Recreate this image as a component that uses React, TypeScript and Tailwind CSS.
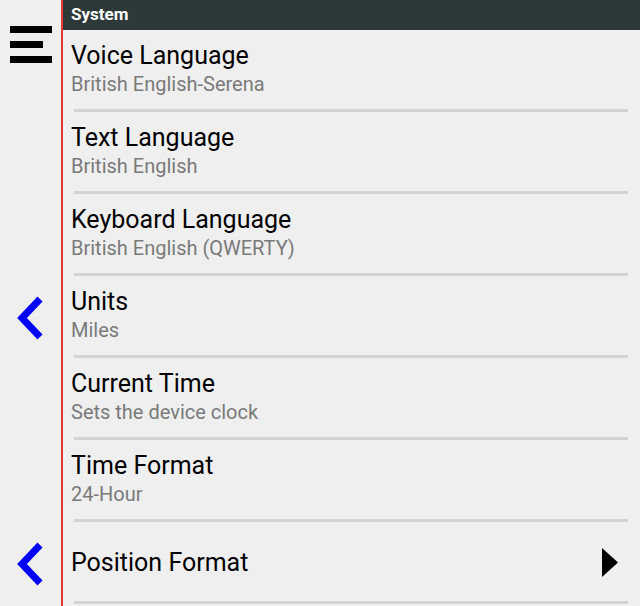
const rows = [
  { title: "Voice Language", sub: "British English-Serena" },
  { title: "Text Language", sub: "British English" },
  { title: "Keyboard Language", sub: "British English (QWERTY)" },
  { title: "Units", sub: "Miles" },
  { title: "Current Time", sub: "Sets the device clock" },
  { title: "Time Format", sub: "24-Hour" },
];

function Chevron() {
  return (
    <svg width="30" height="44" viewBox="0 0 30 44">
      <polyline points="25,3 7,22 25,41" fill="none" stroke="#0000ff" strokeWidth="7" strokeLinejoin="miter" />
    </svg>
  );
}

export default function App() {
  return (
    <div
      className="flex h-[606px] w-[640px] overflow-hidden bg-[#efefef]"
      style={{ fontFamily: "Roboto, 'Liberation Sans', sans-serif" }}
    >
      {/* side rail */}
      <div className="flex w-[63px] shrink-0 flex-col border-r-2 border-[#e53935]">
        <div className="ml-[10px] mt-[26px] flex flex-col gap-[8px]">
          <div className="h-[7px] w-[42px] bg-black" />
          <div className="h-[7px] w-[33px] bg-black" />
          <div className="h-[7px] w-[42px] bg-black" />
        </div>
        <div className="ml-[15px] mt-[233px]">
          <Chevron />
        </div>
        <div className="ml-[15px] mt-[202px]">
          <Chevron />
        </div>
      </div>

      <div className="flex min-w-0 flex-1 flex-col">
        <div className="flex h-[30px] shrink-0 items-center bg-[#2d3939] pl-[8px] text-[17px] font-bold text-white">
          System
        </div>
        {rows.map((r) => (
          <div key={r.title} className="flex h-[82px] shrink-0 flex-col">
            <div className="flex flex-1 flex-col pl-[8px] pt-[12px]">
              <div className="text-[25px] leading-[28px] text-black">{r.title}</div>
              <div className="text-[20px] leading-[28px] text-[#7a7a7a]">{r.sub}</div>
            </div>
            <div className="ml-[11px] mr-[12px] h-[3px] bg-[#d3d3d3]" />
          </div>
        ))}
        <div className="flex h-[82px] shrink-0 flex-col">
          <div className="flex flex-1 items-center justify-between pl-[8px] pr-[22px] pt-[2px]">
            <div className="text-[25px] leading-[28px] text-black">Position Format</div>
            <svg width="16" height="29" viewBox="0 0 16 29">
              <polygon points="0,0 16,14.5 0,29" fill="#000" />
            </svg>
          </div>
          <div className="ml-[11px] mr-[12px] h-[3px] bg-[#d3d3d3]" />
        </div>
      </div>
    </div>
  );
}
